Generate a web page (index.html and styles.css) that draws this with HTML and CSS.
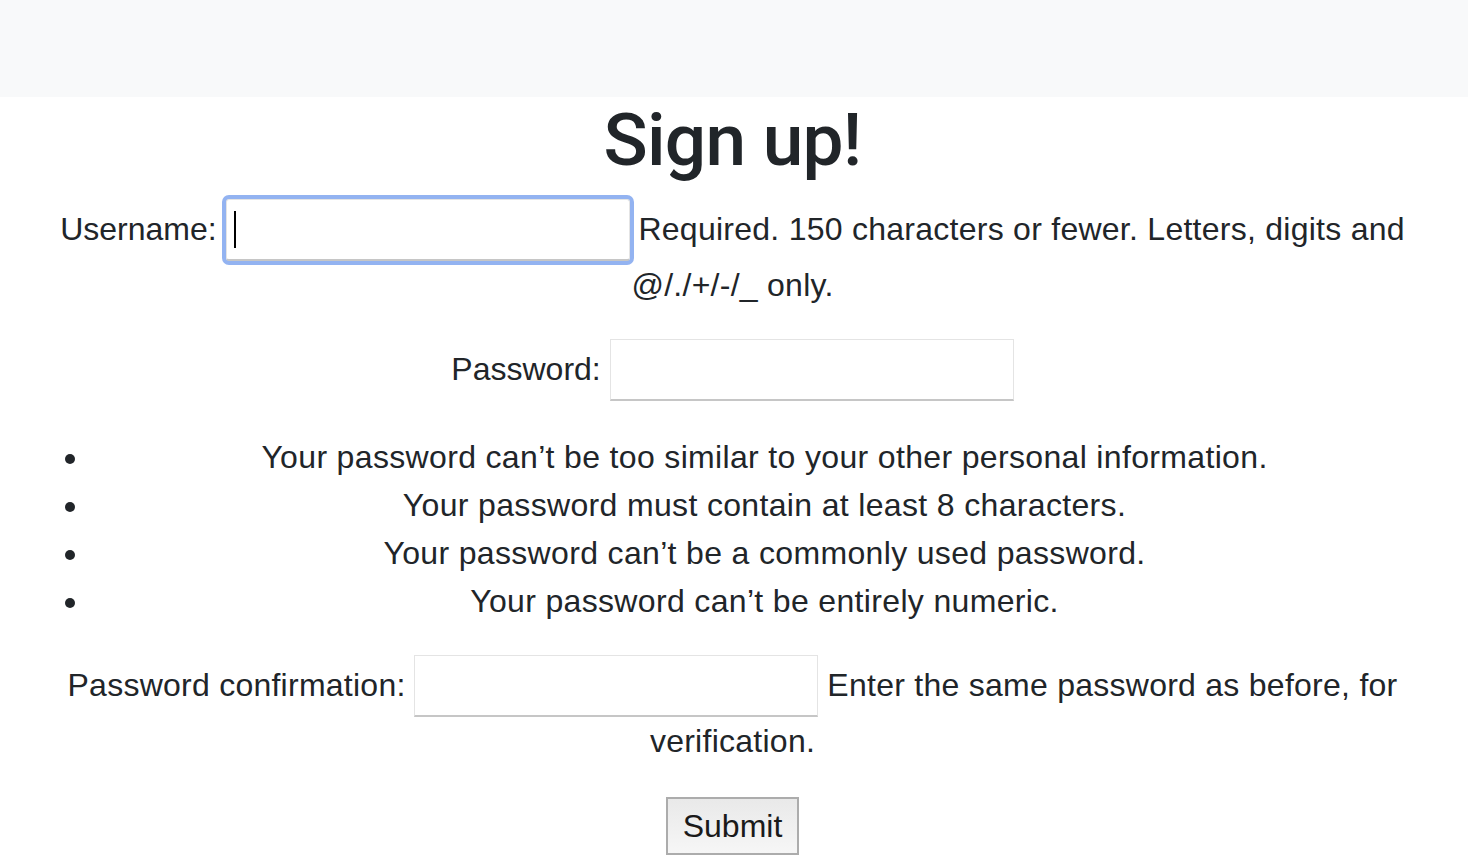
FILE: index.html
```html
<!DOCTYPE html>
<html lang="en">
<head>
<meta charset="utf-8">
<title>Sign up</title>
<link rel="stylesheet" href="styles.css">
</head>
<body>
<nav class="navbar"></nav>
<main class="page">
  <h1 class="title">Sign up!</h1>
  <form class="signup">
    <p class="field field-first"><label class="label" for="id_username">Username:</label> <input class="input input-focus" type="text" id="id_username"> <span class="helptext">Required. 150 characters or fewer. Letters, digits and @/./+/-/_ only.</span></p>
    <p class="field"><label class="label" for="id_password1">Password:</label> <input class="input" type="password" id="id_password1"></p>
    <ul class="rules">
      <li>Your password can’t be too similar to your other personal information.</li>
      <li>Your password must contain at least 8 characters.</li>
      <li>Your password can’t be a commonly used password.</li>
      <li>Your password can’t be entirely numeric.</li>
    </ul>
    <p class="field"><label class="label label-long" for="id_password2">Password confirmation:</label> <input class="input" type="password" id="id_password2"> <span class="helptext">Enter the same password as before, for verification.</span></p>
    <button class="submit" type="button">Submit</button>
  </form>
</main>
</body>
</html>
```
FILE: styles.css
```css
html, body {
  margin: 0;
  padding: 0;
  background: #ffffff;
}
body {
  font-family: "Liberation Sans", Arial, sans-serif;
  font-size: 32px;
  line-height: 48px;
  color: #212529;
}
.navbar {
  height: 97px;
  background: #f8f9fa;
}
.page {
  padding: 0 30px 0 27px;
  text-align: center;
}
.title {
  font-family: Roboto, "Liberation Sans", sans-serif;
  font-weight: 500;
  font-size: 73px;
  line-height: 87px;
  letter-spacing: -0.75px;
  margin: 0 0 15px 0;
}
.signup {
  margin: 0;
}
.field {
  margin: 0 0 32px 0;
}
.field-first {
  margin-bottom: 30px;
}
.label {
  font-size: 32px;
}
.label-long {
  letter-spacing: 0.25px;
}
.helptext {
  letter-spacing: 0.26px;
}
.input {
  box-sizing: border-box;
  width: 404px;
  height: 62px;
  padding: 0 10px;
  margin: 0;
  font-family: "Liberation Sans", Arial, sans-serif;
  font-size: 32px;
  border: 1px solid #e4e4e4;
  border-bottom: 2px solid #c6c6c6;
  border-radius: 0;
  background: #ffffff;
  vertical-align: baseline;
  outline: none;
}
.input-focus {
  border-radius: 3px;
  box-shadow: 0 0 0 4px #93b3f1;
  background-image: linear-gradient(#000000, #000000);
  background-repeat: no-repeat;
  background-position: 7px 11px;
  background-size: 2px 37px;
}
.rules {
  margin: 0 0 30px 0;
  padding-left: 64px;
  list-style: disc outside;
  letter-spacing: 0.34px;
}
.rules li {
  margin: 0;
}
.submit {
  box-sizing: border-box;
  width: 133px;
  height: 58px;
  padding: 0;
  font-family: "Liberation Sans", Arial, sans-serif;
  font-size: 32px;
  color: #1a1a1a;
  border: 2px solid #acacac;
  border-radius: 0;
  background: linear-gradient(#e9e9e9, #f6f6f6);
}
```
